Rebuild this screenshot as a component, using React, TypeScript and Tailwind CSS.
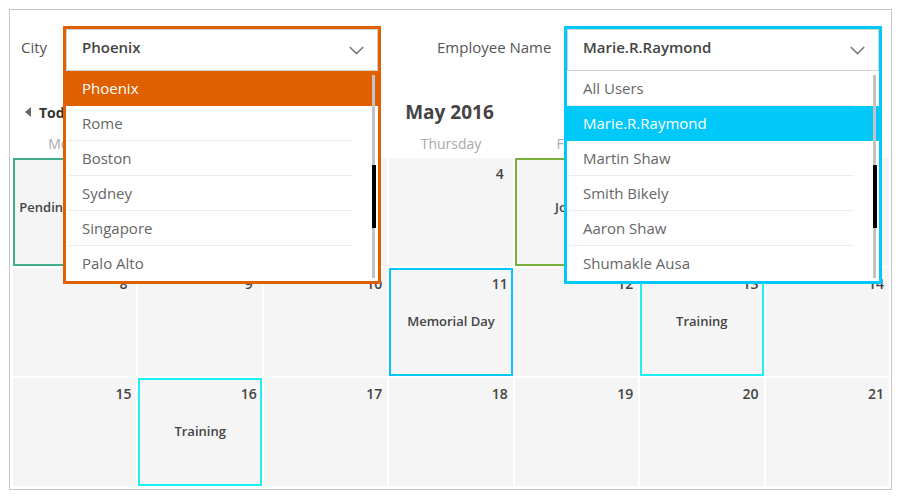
import React from "react";

type DDProps = {
  value: string;
  items: string[];
  sel: number;
  frameCls: string;
  hiCls: string;
};

function Chevron() {
  return (
    <svg width="15" height="9" viewBox="0 0 15 9" className="shrink-0">
      <path d="M0.8 1 L7.5 7.6 L14.2 1" fill="none" stroke="#7a7a7a" strokeWidth="1.6" />
    </svg>
  );
}

function Dropdown({ value, items, sel, frameCls, hiCls }: DDProps) {
  return (
    <div className="relative w-[318px] h-[45px] shrink-0">
      <div className={`absolute left-0 top-0 z-10 w-[318px] border-[3px] bg-white ${frameCls}`}>
        <div className="h-[42px] border border-[#d2d2d2] flex items-center justify-between pl-[15px] pr-[13px]">
          <span className="text-[15px] font-semibold text-[#444] mb-[6px]">{value}</span>
          <Chevron />
        </div>
        <div className="relative pb-[1px]">
          {items.map((it, i) => {
            const isSel = i === sel;
            return (
              <React.Fragment key={it}>
                <div
                  className={
                    isSel
                      ? `h-[35px] flex items-center pl-[16px] text-[15px] text-white ${hiCls}`
                      : "h-[34px] flex items-center pl-[16px] text-[15px] text-[#666]"
                  }
                >
                  {it}
                </div>
                {!isSel && i < items.length - 1 && (
                  <div className="ml-[2px] w-[285px] h-px bg-[#ececec]" />
                )}
              </React.Fragment>
            );
          })}
          <div className="absolute right-[3px] top-[4px] bottom-[3px] w-[3px] bg-[#c3c3c3]" />
          <div className="absolute right-[2px] top-[94px] h-[63px] w-[4px] bg-black" />
        </div>
      </div>
    </div>
  );
}

type Cell = { n: number; label?: string; cls?: string; high?: boolean };

const rows: Cell[][] = [
  [
    { n: 1, label: "Pending Approval", cls: "border-2 border-[#3dae85]", high: true },
    { n: 2 },
    { n: 3 },
    { n: 4 },
    { n: 5, label: "Joining", cls: "border-2 border-[#79b03b]", high: true },
    { n: 6 },
    { n: 7 },
  ],
  [
    { n: 8 },
    { n: 9 },
    { n: 10 },
    { n: 11, label: "Memorial Day", cls: "border-2 border-[#00c8f8]" },
    { n: 12 },
    { n: 13, label: "Training", cls: "border-2 border-[#1ef0f4]" },
    { n: 14 },
  ],
  [
    { n: 15 },
    { n: 16, label: "Training", cls: "border-2 border-[#1ef0f4]" },
    { n: 17 },
    { n: 18 },
    { n: 19 },
    { n: 20 },
    { n: 21 },
  ],
];

const days = ["Monday", "Tuesday", "Wednesday", "Thursday", "Friday", "Saturday", "Sunday"];

export default function App() {
  return (
    <div className="w-[900px] h-[500px] bg-white overflow-hidden p-[9px] font-['Open_Sans',sans-serif]">
      <div className="w-[883px] h-[481px] border border-[#c6c6c6]">
        {/* Filters */}
        <div className="flex pt-[16px] pl-[11px]">
          <div className="w-[42px] h-[45px] pt-[3px] shrink-0">
            <div className="h-[42px] flex items-center">
              <span className="text-[15px] font-medium text-[#555] mb-[6px]">City</span>
            </div>
          </div>
          <Dropdown
            value="Phoenix"
            items={["Phoenix", "Rome", "Boston", "Sydney", "Singapore", "Palo Alto"]}
            sel={0}
            frameCls="border-[#e05f00]"
            hiCls="bg-[#e05f00]"
          />
          <div className="ml-[56px] w-[127px] h-[45px] pt-[3px] shrink-0">
            <div className="h-[42px] flex items-center">
              <span className="text-[15px] font-medium text-[#555] whitespace-nowrap mb-[6px]">
                Employee Name
              </span>
            </div>
          </div>
          <Dropdown
            value="Marie.R.Raymond"
            items={["All Users", "Marie.R.Raymond", "Martin Shaw", "Smith Bikely", "Aaron Shaw", "Shumakle Ausa"]}
            sel={1}
            frameCls="border-[#00c9f9]"
            hiCls="bg-[#00c9f9]"
          />
        </div>

        {/* Toolbar */}
        <div className="mt-[24px] h-[34px] grid grid-cols-[1fr_auto_1fr] items-center pl-[3px] pr-[2px]">
          <div className="flex items-center pl-[12px] gap-[8px]">
            <svg width="6" height="10" viewBox="0 0 6 10">
              <path d="M6 0 L0 5 L6 10 Z" fill="#666" />
            </svg>
            <span className="text-[14px] font-bold text-[#333]">Today</span>
          </div>
          <div className="text-[19px] font-bold text-[#444] mr-[3px]">May 2016</div>
          <div />
        </div>

        {/* Day names */}
        <div className="h-[29px] grid grid-cols-7 gap-[2px] pl-[3px] pr-[2px] items-center">
          {days.map((d) => (
            <div key={d} className="text-center text-[14px] text-[#aaa]">
              {d}
            </div>
          ))}
        </div>

        {/* Grid */}
        <div className="grid grid-cols-7 grid-rows-[repeat(3,108px)] gap-[2px] pl-[3px] pr-[2px]">
          {rows.flat().map((c) => (
            <div key={c.n} className={`relative bg-[#f5f5f5] ${c.cls ?? ""}`}>
              <div
                className={`absolute w-[20px] text-center text-[14px] leading-[20px] font-semibold text-[#444] ${
                  c.cls ? "top-[4px] right-[1px]" : "top-[6px] right-[3px]"
                }`}
              >
                {c.n}
              </div>
              {c.label && (
                <div
                  className={`h-full flex items-center justify-center text-[13px] font-semibold text-[#444] whitespace-nowrap ${
                    c.high ? "pb-[8px]" : ""
                  }`}
                >
                  {c.label}
                </div>
              )}
            </div>
          ))}
        </div>
      </div>
    </div>
  );
}
